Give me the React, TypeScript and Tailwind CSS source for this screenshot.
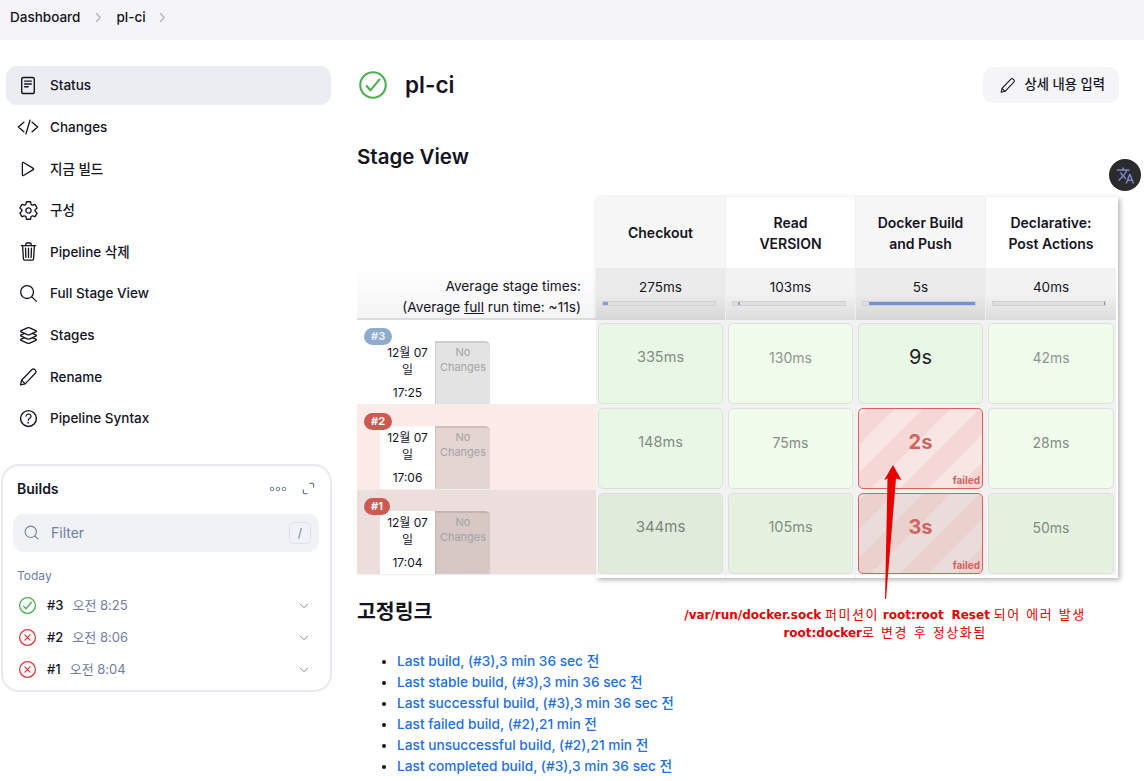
import React from "react";
import { ChevronDown, ChevronRight, Search } from "lucide-react";
import { MdTranslate } from "react-icons/md";
import {
  IoCheckmarkCircleOutline,
  IoCloseCircleOutline,
  IoCodeSlashOutline,
  IoHelpCircleOutline,
  IoLayersOutline,
  IoPlayOutline,
  IoSearchOutline,
  IoSettingsOutline,
  IoTrashOutline,
} from "react-icons/io5";

function StatusIcon({ className }: { className?: string }) {
  return (
    <svg viewBox="0 0 20 24" fill="none" stroke="currentColor" strokeWidth="1.6" strokeLinecap="round" className={className}>
      <rect x="2.8" y="2.8" width="14.4" height="18.4" rx="2.2" />
      <path d="M6.2 7h7.6M6.2 10.2h7.6M6.2 13.4h4" />
    </svg>
  );
}

function PencilIcon({ className }: { className?: string }) {
  return (
    <svg viewBox="0 0 24 24" fill="none" stroke="currentColor" strokeWidth="1.5" strokeLinejoin="round" className={className}>
      <path d="M3 21.5l1.3-5.6L16.8 3a2.3 2.3 0 0 1 3.2 0l1 1a2.3 2.3 0 0 1 0 3.2L8.6 20.2z" />
      <path d="M4.3 15.9l4.3 4.3" />
    </svg>
  );
}

const menuItems = [
  { label: "Status", icon: <StatusIcon className="h-[21px] w-[20px]" />, active: true },
  { label: "Changes", icon: <IoCodeSlashOutline className="h-[22px] w-[22px]" /> },
  { label: "지금 빌드", icon: <IoPlayOutline className="h-[20px] w-[20px]" /> },
  { label: "구성", icon: <IoSettingsOutline className="h-[21px] w-[21px]" /> },
  { label: "Pipeline 삭제", icon: <IoTrashOutline className="h-[21px] w-[21px]" /> },
  { label: "Full Stage View", icon: <IoSearchOutline className="h-[21px] w-[21px]" /> },
  { label: "Stages", icon: <IoLayersOutline className="h-[21px] w-[21px]" /> },
  { label: "Rename", icon: <PencilIcon className="h-[20px] w-[20px]" /> },
  { label: "Pipeline Syntax", icon: <IoHelpCircleOutline className="h-[23px] w-[23px]" /> },
];

const builds = [
  { id: "#3", time: "오전 8:25", ok: true },
  { id: "#2", time: "오전 8:06", ok: false },
  { id: "#1", time: "오전 8:04", ok: false },
];

const stages = [
  { name: ["Checkout"], avg: "275ms", head: "bg-[#f7f7f7]", avgBg: "from-[#ebebeb] via-[#ebebeb] to-[#d6d6d6]", fill: "ml-0 w-[5px] bg-[#7f9fd8]" },
  { name: ["Read", "VERSION"], avg: "103ms", head: "bg-white", avgBg: "from-[#f2f2f2] via-[#f2f2f2] to-[#dcdcdc]", fill: "ml-[5px] w-[2px] bg-[#8aa6da]" },
  { name: ["Docker Build", "and Push"], avg: "5s", head: "bg-[#f7f7f7]", avgBg: "from-[#ebebeb] via-[#ebebeb] to-[#d6d6d6]", fill: "ml-[6px] w-[106px] bg-[#6f93d6]" },
  { name: ["Declarative:", "Post Actions"], avg: "40ms", head: "bg-white", avgBg: "from-[#f2f2f2] via-[#f2f2f2] to-[#dcdcdc]", fill: "ml-[111px] w-[1px] bg-[#6f93d6]" },
];

const rows = [
  {
    id: "#3", date: "17:25", rowBg: "bg-white", badge: "bg-[#8eaacd] text-white/80", noCh: "bg-[#e3e3e3]",
    cells: [
      { t: "335ms", bg: "bg-[#e9f8e6]", size: "text-[14.5px] text-[#838b83]" },
      { t: "130ms", bg: "bg-[#f0fded]", size: "text-[14px] text-[#8d958d]" },
      { t: "9s", bg: "bg-[#e9f8e6]", size: "text-[20px] text-[#222222]" },
      { t: "42ms", bg: "bg-[#f0fded]", size: "text-[14px] text-[#8d958d]" },
    ],
  },
  {
    id: "#2", date: "17:06", rowBg: "bg-[#fdebe9]", badge: "bg-[#cc5a50] text-white", noCh: "bg-[#e4d4d2]",
    cells: [
      { t: "148ms", bg: "bg-[#e9f8e6]", size: "text-[14.5px] text-[#838b83]" },
      { t: "75ms", bg: "bg-[#f0fded]", size: "text-[14px] text-[#838b83]" },
      { t: "2s", failed: true, bg: "bg-[repeating-linear-gradient(135deg,#f7e6e4_0px,#f7e6e4_5px,#f5d8d5_5px,#f5d8d5_25px,#f7e6e4_25px,#f7e6e4_40px)]", size: "" },
      { t: "28ms", bg: "bg-[#f0fded]", size: "text-[14px] text-[#838b83]" },
    ],
  },
  {
    id: "#1", date: "17:04", rowBg: "bg-[#ecdedc]", badge: "bg-[#cc5a50] text-white", noCh: "bg-[#d7c8c6]",
    cells: [
      { t: "344ms", bg: "bg-[#dfecdb]", size: "text-[15px] text-[#7c847c]" },
      { t: "105ms", bg: "bg-[#e5f2e0]", size: "text-[14.5px] text-[#838b83]" },
      { t: "3s", failed: true, bg: "bg-[repeating-linear-gradient(135deg,#eadcda_0px,#eadcda_5px,#ebd1ce_5px,#ebd1ce_25px,#eadcda_25px,#eadcda_40px)]", size: "" },
      { t: "50ms", bg: "bg-[#e5f2e0]", size: "text-[14px] text-[#838b83]" },
    ],
  },
];

const links = [
  "Last build, (#3),3 min 36 sec 전",
  "Last stable build, (#3),3 min 36 sec 전",
  "Last successful build, (#3),3 min 36 sec 전",
  "Last failed build, (#2),21 min 전",
  "Last unsuccessful build, (#2),21 min 전",
  "Last completed build, (#3),3 min 36 sec 전",
];

function Ko({ children }: { children: React.ReactNode }) {
  return <span className="text-[13px] tracking-[1.5px]">{children}</span>;
}

export default function App() {
  return (
    <div className="relative h-[781px] w-[1144px] overflow-hidden bg-white font-['Inter','Noto_Sans_CJK_KR',sans-serif] text-[#14141f]">
      {/* Breadcrumb */}
      <div className="flex h-10 items-center bg-[#f5f5f8] pl-[10px] pb-[6px] text-[13.5px] font-medium">
        <span>Dashboard</span>
        <ChevronRight className="ml-[11px] mr-[10px] h-[15px] w-[15px] text-[#a9b3c6]" />
        <span>pl-ci</span>
        <ChevronRight className="ml-[9px] h-[15px] w-[15px] text-[#a9b3c6]" />
      </div>

      <div className="flex">
        {/* Sidebar */}
        <aside className="w-[357px] shrink-0 pl-[1px] pt-[26px]">
          <nav className="ml-[5px] flex w-[325px] flex-col gap-[2.6px]">
            {menuItems.map((item) => (
              <div
                key={item.label}
                className={`flex h-[39px] items-center rounded-[11px] text-[13.5px] font-medium ${item.active ? "bg-[#ecedf3]" : ""}`}
              >
                <span className="flex w-[44px] justify-center">{item.icon}</span>
                <span>{item.label}</span>
              </div>
            ))}
          </nav>

          {/* Builds */}
          <div className="mt-[26px] h-[228px] w-[331px] rounded-[18px] border-2 border-[#e9e9f0] pl-[10px] pr-[11px] pt-[12px]">
            <div className="flex h-[22px] items-center justify-between pl-[4px] pr-[4px]">
              <span className="text-[14px] font-semibold">Builds</span>
              <div className="flex items-center gap-[15px] text-[#6e80a0]">
                <svg viewBox="0 0 18 6" className="h-[6px] w-[18px]" fill="none" stroke="currentColor" strokeWidth="1">
                  <circle cx="3" cy="3" r="1.8" />
                  <circle cx="9" cy="3" r="1.8" />
                  <circle cx="15" cy="3" r="1.8" />
                </svg>
                <svg viewBox="0 0 14 14" className="h-[13px] w-[13px]" fill="none" stroke="currentColor" strokeWidth="1.4" strokeLinecap="round">
                  <path d="M8.5 1.5h3a1 1 0 0 1 1 1v3M5.5 12.5h-3a1 1 0 0 1-1-1v-3" />
                </svg>
              </div>
            </div>
            <div className="mt-[14px] flex h-[38px] items-center rounded-[11px] bg-[#f1f2f6] pl-[10px] pr-[8px] text-[14px] text-[#6e80a0]">
              <Search className="h-[17px] w-[17px]" strokeWidth={1.5} />
              <span className="ml-[11px] flex-1">Filter</span>
              <span className="flex h-[22px] w-[22px] items-center justify-center rounded-[5px] border border-[#dfe1e8] text-[12px]">/</span>
            </div>
            <div className="mt-[16px] pl-[4px] text-[12px] leading-[15px] text-[#6e80a0]">Today</div>
            <div className="mt-[7px] flex flex-col">
              {builds.map((b) => (
                <div key={b.id} className="flex h-[32px] items-center pl-[4px] pr-[8px] text-[13px]">
                  {b.ok ? (
                    <IoCheckmarkCircleOutline className="h-[21px] w-[21px] text-[#4caf50]" />
                  ) : (
                    <IoCloseCircleOutline className="h-[21px] w-[21px] text-[#dc3a3a]" />
                  )}
                  <span className="ml-[9px] font-medium">{b.id}</span>
                  <span className="ml-[9px] flex-1 text-[#6e80a0]">{b.time}</span>
                  <ChevronDown className="h-[14px] w-[14px] text-[#6e80a0]" strokeWidth={1.6} />
                </div>
              ))}
            </div>
          </div>
        </aside>

        {/* Main */}
        <main className="w-[762px] pt-[27px]">
          <div className="flex h-[36px] items-center justify-between">
            <div className="flex items-center">
              <IoCheckmarkCircleOutline className="-ml-[1px] h-[34px] w-[34px] text-[#4caf50]" />
              <h1 className="ml-[15px] text-[22.5px] font-semibold">pl-ci</h1>
            </div>
            <button className="flex h-[36px] items-center gap-[6px] rounded-[10px] bg-[#f5f5f8] pl-[16px] pr-[14px] text-[13.3px] font-medium">
              <PencilIcon className="h-[17px] w-[17px]" />
              <span className="ml-[3px]">상세 내용 입력</span>
            </button>
          </div>

          <h2 className="mt-[40px] text-[20.5px] leading-[28px] font-semibold">Stage View</h2>

          {/* Stage table */}
          <div className="relative mt-[26px] flex h-[380px] w-[760px]">
            <div className="w-[239px] shrink-0 pt-[71px]">
              <div className="flex h-[52px] flex-col items-end justify-center border-b-2 border-[#dcdcdc] bg-gradient-to-b from-white to-[#f5f5f5] pr-[15px] pt-[8px] text-[13.7px] leading-[21px]">
                <div>Average stage times:</div>
                <div>
                  (Average <span className="underline">full</span> run time: ~11s)
                </div>
              </div>
              {rows.map((row) => (
                <div key={row.id} className={`relative flex h-[85px] items-end border-b border-[#eeeeee] pl-[23px] ${row.rowBg}`}>
                  <span className={`absolute left-[7px] top-[8px] z-10 rounded-full px-[7px] text-[11px] leading-[17px] font-bold ${row.badge}`}>
                    {row.id}
                  </span>
                  <div className="flex h-[63px] w-[55px] flex-col items-center bg-white pt-[3px] text-[12px] leading-[17px]">
                    <span>12월 07</span>
                    <span>일</span>
                    <span className="mt-[6px]">{row.date}</span>
                  </div>
                  <div className={`h-[63px] w-[55px] rounded-tr-[5px] border-t-2 border-l border-[#00000018] pt-[2px] text-center text-[11px] leading-[15px] text-[#a3a3a3] ${row.noCh}`}>
                    No
                    <br />
                    Changes
                  </div>
                </div>
              ))}
            </div>

            <div className="flex h-[381px] w-[522px] shrink-0 shadow-[2px_2px_5px_rgba(0,0,0,0.3)]">
              {stages.map((stage, col) => (
                <div key={stage.avg} className="flex w-[130px] flex-col border-r border-[#efefef] last:border-r-0">
                  <div className={`flex h-[71px] flex-col items-center justify-center text-[14px] leading-[21px] font-semibold ${stage.head}`}>
                    {stage.name.map((line) => (
                      <div key={line}>{line}</div>
                    ))}
                  </div>
                  <div className={`h-[52px] bg-gradient-to-b pt-[9px] ${stage.avgBg}`}>
                    <div className="text-center text-[13.5px] leading-[20px]">{stage.avg}</div>
                    <div className="ml-[6px] mt-[4px] h-[5px] w-[114px] border border-[#d0d0d0] bg-[#dfdfdf]">
                      <div className={`h-[3px] ${stage.fill}`} />
                    </div>
                  </div>
                  {rows.map((row) => {
                    const cell = row.cells[col];
                    return (
                      <div key={row.id} className="h-[85px] bg-[#f2f2f2] px-[2px] pt-[3px] pb-[1px]">
                        {cell.failed ? (
                          <div className={`relative flex h-[81px] items-center justify-center rounded-[5px] border-[1.5px] border-[#d9605c] pb-[13px] text-[20px] font-bold text-[#cf6460] ${cell.bg}`}>
                            {cell.t}
                            <span className="absolute bottom-[1px] right-[2px] text-[10px] leading-[14px]">failed</span>
                          </div>
                        ) : (
                          <div className={`flex h-[81px] items-center justify-center rounded-[5px] border border-[#dcdfdc] pb-[13px] ${cell.bg} ${cell.size}`}>
                            {cell.t}
                          </div>
                        )}
                      </div>
                    );
                  })}
                </div>
              ))}
            </div>

            {/* Annotation over the table */}
            <svg viewBox="0 0 30 140" className="absolute left-[519px] top-[266px] h-[140px] w-[30px]">
              <polygon points="17,2 25.5,17 20,15.5 10,136 9,136 11.5,15.5 8,17" fill="#e60000" />
            </svg>
            <div className="absolute left-[278px] top-[409px] w-[500px] text-center font-['DejaVu_Sans','Noto_Sans_CJK_KR',sans-serif] text-[12px] leading-[18px] text-[#e60000]">
              <div>
                <b>/var/run/docker.sock</b> <Ko>퍼미션이</Ko> <b>root:root</b> &nbsp;<b>Reset</b> <Ko>되어 에러 발생</Ko>
              </div>
              <div>
                <b>root:docker</b>
                <Ko>로 변경 후 정상화됨</Ko>
              </div>
            </div>
          </div>

          <h2 className="mt-[21px] text-[20.5px] leading-[28px] font-semibold">고정링크</h2>

          <ul className="mt-[25px] list-disc pl-[40px] text-[13.7px] leading-[21px] font-medium text-[#1e6fe0]">
            {links.map((link) => (
              <li key={link} className="marker:text-[#14141f]">{link}</li>
            ))}
          </ul>
        </main>
      </div>

      {/* Floating translate button */}
      <div className="absolute left-[1109px] top-[159px] flex h-[32px] w-[32px] items-center justify-center rounded-full bg-[#2b2b2e]">
        <MdTranslate className="h-[19px] w-[19px] text-[#7b86c8]" />
      </div>
    </div>
  );
}
